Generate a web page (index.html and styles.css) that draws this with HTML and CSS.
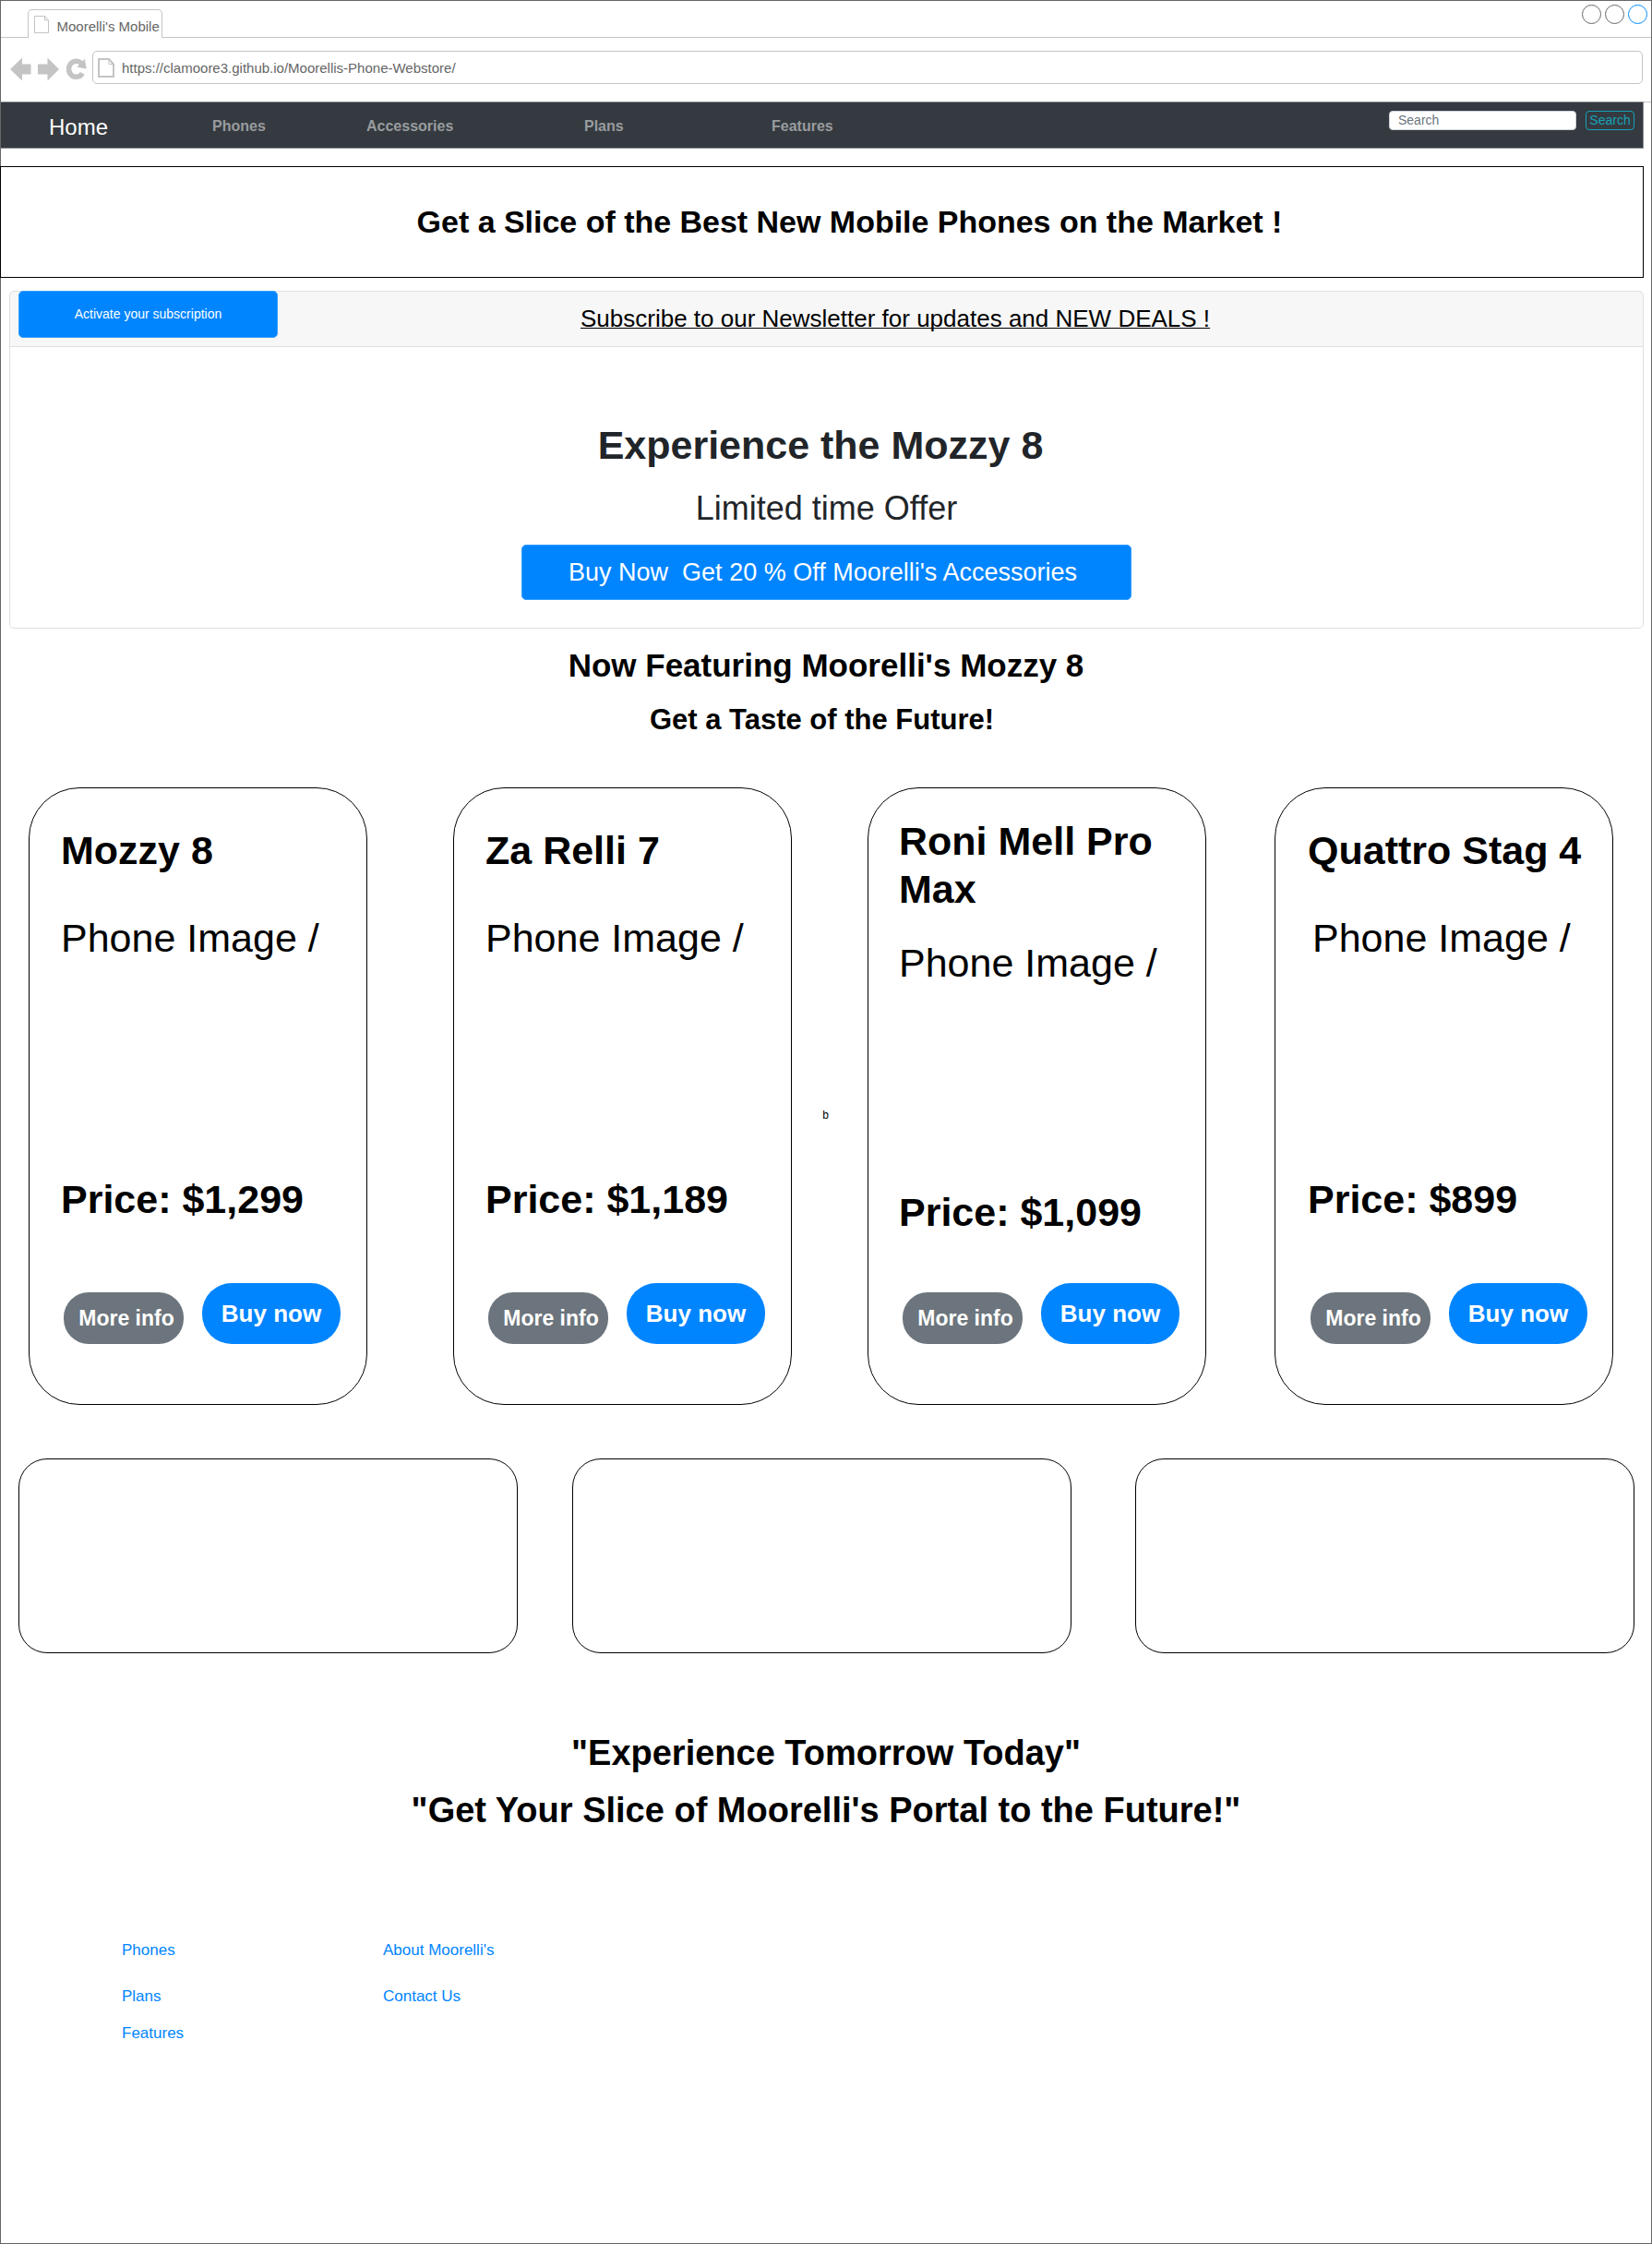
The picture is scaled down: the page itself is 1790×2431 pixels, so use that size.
FILE: index.html
```html
<!DOCTYPE html>
<html lang="en">
<head>
<meta charset="utf-8">
<title>Moorelli's Mobile</title>
<link rel="stylesheet" href="styles.css">
</head>
<body>
<div class="page">
  <header class="chrome">
    <div class="tab-row">
      <div class="tab">
        <svg class="tab-doc" width="17" height="20" viewBox="0 0 17 20" fill="none" stroke="#c4c4c4"><path d="M.5.5H11.5L15.5 5V18.5H.5ZM11.5.5V5H15.5"/></svg>
        <span>Moorelli's Mobile</span>
      </div>
      <div class="window-controls"><i></i><i></i><i class="active"></i></div>
    </div>
    <div class="address-row">
      <svg class="back" width="23" height="26" viewBox="0 0 23 26" fill="#c4c4c4"><path d="M0 13L13 .5V7.500H22.500V18.500H13V25.500Z"/></svg>
      <svg class="forward" width="23" height="26" viewBox="0 0 23 26" fill="#c4c4c4"><path d="M23 13L10.500 .5V7.500H0V18.500H10.500V25.500Z"/></svg>
      <svg class="reload" width="23" height="24" viewBox="0 0 23 24"><path d="M16 5.600A8 8.500 0 1 0 17.300 16.300" fill="none" stroke="#c4c4c4" stroke-width="5.600"/><path d="M19.800 .8L21.700 11.600L11.300 9.800Z" fill="#c4c4c4"/></svg>
      <div class="address">
        <svg width="18" height="21" viewBox="0 0 18 21" fill="none" stroke="#c4c4c4" stroke-width="2"><path d="M1 1H12L17 6.500V20H1Z"/><path d="M12 1V6.500H17" stroke-width="1"/></svg>
        <span>https://clamoore3.github.io/Moorellis-Phone-Webstore/</span>
      </div>
    </div>
  </header>

  <div class="navbar-wrap">
    <nav class="navbar">
      <a class="brand">Home</a>
      <a class="nav-phones">Phones</a>
      <a class="nav-accessories">Accessories</a>
      <a class="nav-plans">Plans</a>
      <a class="nav-features">Features</a>
      <div class="search"><span class="search-field">Search</span><span class="search-button">Search</span></div>
    </nav>
    <div class="frame-edge"></div>
  </div>

  <section class="banner"><h1>Get a Slice of the Best New Mobile Phones on the Market !</h1></section>

  <section class="promo">
    <div class="promo-head">
      <a class="activate">Activate your subscription</a>
      <a class="newsletter">Subscribe to our Newsletter for updates and NEW DEALS !</a>
    </div>
    <div class="promo-body">
      <h2>Experience the Mozzy 8</h2>
      <p>Limited time Offer</p>
      <a class="offer">Buy Now&nbsp; Get 20 % Off Moorelli's Accessories</a>
    </div>
  </section>

  <section class="featuring">
    <h2>Now Featuring Moorelli's Mozzy 8</h2>
    <h3>Get a Taste of the Future!</h3>
  </section>

  <section class="phones">
    <article class="phone">
      <h2>Mozzy 8</h2>
      <p class="image-label">Phone Image /</p>
      <p class="price">Price: $1,299</p>
      <div class="actions"><a class="more">More info</a><a class="buy">Buy now</a></div>
    </article>
    <article class="phone second">
      <h2>Za Relli 7</h2>
      <p class="image-label">Phone Image /</p>
      <p class="price">Price: $1,189</p>
      <div class="actions"><a class="more">More info</a><a class="buy">Buy now</a></div>
    </article>
    <span class="note">b</span>
    <article class="phone tall-title">
      <h2>Roni Mell Pro<br>Max</h2>
      <p class="image-label">Phone Image /</p>
      <p class="price">Price: $1,099</p>
      <div class="actions"><a class="more">More info</a><a class="buy">Buy now</a></div>
    </article>
    <article class="phone fourth">
      <h2>Quattro Stag 4</h2>
      <p class="image-label">Phone Image /</p>
      <p class="price">Price: $899</p>
      <div class="actions"><a class="more">More info</a><a class="buy">Buy now</a></div>
    </article>
  </section>

  <section class="panels"><div></div><div></div><div></div></section>

  <section class="slogans">
    <h2>"Experience Tomorrow Today"</h2>
    <h2>"Get Your Slice of Moorelli's Portal to the Future!"</h2>
  </section>

  <footer class="footer">
    <div class="links"><a>Phones</a><a>Plans</a><a class="close">Features</a></div>
    <div class="links"><a>About Moorelli's</a><a>Contact Us</a></div>
  </footer>
</div>
</body>
</html>
```
FILE: styles.css
```css
* { box-sizing: border-box; }
body { margin: 0; background: #fff; font-family: "Liberation Sans", Arial, sans-serif; color: #000; }
h1, h2, h3, p { margin: 0; white-space: nowrap; }
svg { display: block; flex: none; }

.page { width: 1790px; height: 2431px; overflow: hidden; box-shadow: inset 0 0 0 1px #666; }

/* Browser frame */
.chrome { height: 110px; }
.tab-row { display: flex; align-items: flex-start; height: 41px; margin: 0 1px; padding: 5px 4px 0 29px; border-bottom: 1px solid #c4c4c4; }
.tab { display: flex; width: 146px; height: 31px; margin-top: 5px; padding: 6px 0 0 6px; gap: 7.5px; border: 1px solid #c4c4c4; border-bottom: 0; border-radius: 5px 5px 0 0; background: #fff; font-size: 15px; line-height: 24px; color: #666; white-space: nowrap; }
.window-controls { display: flex; gap: 4px; margin-left: auto; }
.window-controls i { width: 21px; height: 21px; border: 1px solid #666; border-radius: 50%; }
.window-controls .active { border-color: #008cff; }
.address-row { display: flex; padding: 14px 10px 0 11px; }
.back, .forward { margin-top: 7px; }
.forward { margin-left: 7px; }
.reload { margin: 8px 0 0 8px; }
.address { display: flex; align-items: center; flex: 1; height: 36px; margin-left: 5px; padding-left: 5px; gap: 8px; border: 1px solid #c4c4c4; border-radius: 5px; font-size: 15px; color: #666; }

/* Site navigation */
.navbar-wrap { display: flex; }
.frame-edge { width: 8px; height: 1px; background: #c4c4c4; }
.navbar { display: flex; align-items: flex-start; width: 1781px; height: 51px; padding-left: 52px; border: 1px solid #868b8f; border-left-color: #666; background: #343a40; color: #999c9f; font-size: 16px; font-weight: bold; line-height: 51px; }
.brand { width: 177px; color: #fff; font-size: 24px; font-weight: normal; line-height: 53px; }
.nav-phones { width: 167px; }
.nav-accessories { width: 236px; }
.nav-plans { width: 203px; }
.search { display: flex; gap: 10px; margin: 9px 9px 0 auto; font-size: 14px; font-weight: normal; line-height: 19px; }
.search-field { width: 203px; height: 21px; padding-left: 9px; border: 1px solid #ced4da; border-radius: 4px; background: #fff; color: #6c757d; }
.search-button { width: 53px; height: 21px; border: 1px solid #17a2b8; border-radius: 4px; color: #17a2b8; text-align: center; }

.banner { width: 1781px; height: 121px; margin-top: 19px; padding-left: 60px; border: 1px solid #000; text-align: center; }
.banner h1 { font-size: 34px; line-height: 119px; letter-spacing: -.02px; }

/* Promotion */
.promo { width: 1771px; height: 366px; margin: 14px 0 0 10px; border: 1px solid #dfdfdf; border-radius: 5px; }
.promo-head { display: flex; height: 61px; margin-top: -1px; padding-left: 9px; border: solid #dfdfdf; border-width: 1px 0; border-radius: 5px 5px 0 0; background: #f7f7f7; }
.activate, .offer { border: 1px solid #339eff; border-radius: 5px; background: #0085ff; color: #fff; text-align: center; }
.activate { width: 281px; height: 51px; margin-top: -1px; font-size: 14px; line-height: 49px; }
.newsletter { margin-left: 328px; font-size: 26px; line-height: 59px; text-decoration: underline; text-decoration-thickness: 1px; text-underline-offset: 1px; text-decoration-skip-ink: none; }
.promo-body { display: flex; flex-direction: column; align-items: center; padding-top: 81px; color: #212529; }
.promo-body h2 { margin-right: 13px; font-size: 43px; line-height: 50px; }
.promo-body p { margin-top: 23px; font-size: 36px; line-height: 42px; }
.offer { width: 661px; height: 60px; margin-top: 18px; padding-right: 8px; font-size: 27px; line-height: 58px; }

.featuring { height: 172px; padding-top: 20px; text-align: center; }
.featuring h2 { font-size: 35px; line-height: 40px; }
.featuring h3 { margin: 19px 9px 0 0; font-size: 31px; line-height: 40px; }

/* Phone cards */
.phones { display: flex; height: 669px; padding-left: 31px; }
.phone { display: flex; flex-direction: column; flex: none; width: 367px; padding: 41px 0 65px 34px; border: 1px solid #000; border-radius: 55px; font-size: 43px; line-height: 52px; }
.phone h2 { font-size: 43px; }
.image-label { margin-top: 43px; }
.price { margin-top: 231px; font-weight: bold; }
.second { margin-left: 93px; }
.tall-title { padding-top: 31px; padding-left: 33px; }
.tall-title .image-label { margin-top: 28px; }
.tall-title .price { margin-top: 218px; }
.fourth { margin-left: 74px; padding-left: 35px; }
.fourth .image-label { padding-left: 5px; }
.note { width: 82px; padding: 345px 9px 0 0; font-size: 12px; line-height: 20px; text-align: center; }
.actions { display: flex; align-items: flex-end; gap: 20px; margin: auto 0 0 3px; color: #fff; font-weight: bold; white-space: nowrap; text-align: center; }
.tall-title .actions { margin-left: 4px; }
.more { width: 130px; height: 56px; padding-left: 6px; border-radius: 27px; background: #6c757d; font-size: 23px; line-height: 56px; }
.buy { width: 150px; height: 66px; border-radius: 32px; background: #0085ff; font-size: 26px; line-height: 66px; }

.panels { display: grid; grid-template-columns: 541px 541px 541px; column-gap: 59px; height: 211px; margin-top: 58px; padding-left: 20px; }
.panels div { border: 1px solid #000; border-radius: 31px; }
.panels div:last-child { margin: 0 -10px 0 10px; }

.slogans { height: 234px; margin-top: 78px; text-align: center; }
.slogans h2 { font-size: 38px; line-height: 60px; }
.slogans h2 + h2 { margin-top: 2px; }

.footer { display: flex; padding-left: 132px; color: #0085ff; font-size: 17px; line-height: 20px; }
.links { display: flex; flex-direction: column; gap: 30px; width: 283px; }
.close { margin-top: -10px; }
```
